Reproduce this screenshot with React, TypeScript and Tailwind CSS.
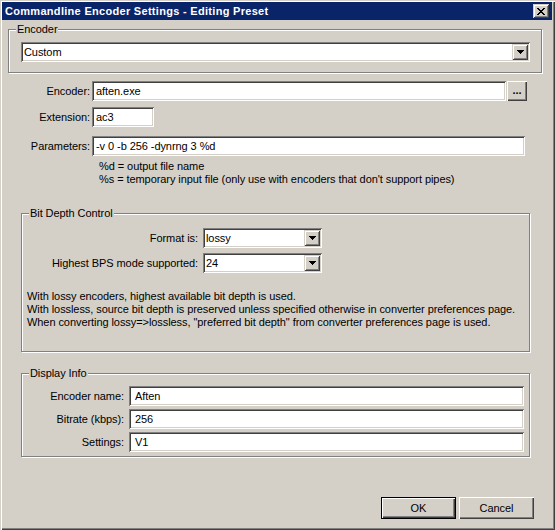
import React from "react";

const sunken =
  "bg-white shadow-[inset_1px_1px_#808080,inset_-1px_-1px_#ffffff,inset_2px_2px_#404040,inset_-2px_-2px_#d4d0c8]";
const raised =
  "bg-[#d4d0c8] shadow-[inset_1px_1px_#d4d0c8,inset_-1px_-1px_#404040,inset_2px_2px_#ffffff,inset_-2px_-2px_#808080]";
const pushBtn =
  "bg-[#d4d0c8] shadow-[inset_1px_1px_#ffffff,inset_-1px_-1px_#404040,inset_-2px_-2px_#808080]";

function Arrow() {
  return (
    <svg width="7" height="4" viewBox="0 0 7 4" shapeRendering="crispEdges">
      <path d="M0 0h7v1H0zM1 1h5v1H1zM2 2h3v1H2zM3 3h1v1H3z" fill="#000" />
    </svg>
  );
}

function CloseX() {
  return (
    <svg width="8" height="7" viewBox="0 0 8 7" shapeRendering="crispEdges">
      <path
        d="M0 0h2v1H0zM6 0h2v1H6zM1 1h2v1H1zM5 1h2v1H5zM2 2h4v1H2zM3 3h2v1H3zM2 4h4v1H2zM1 5h2v1H1zM5 5h2v1H5zM0 6h2v1H0zM6 6h2v1H6z"
        fill="#000"
      />
    </svg>
  );
}

function Combo({ value, className }: { value: string; className: string }) {
  return (
    <div className={`flex h-[20px] p-[2px] ${sunken} ${className}`}>
      <span className="flex-1 flex items-center pl-[1px] leading-none">{value}</span>
      <div className={`w-[16px] h-[16px] flex items-center justify-center ${raised}`}>
        <Arrow />
      </div>
    </div>
  );
}

function Edit({ value, className, pad = "pl-[4px]" }: { value: string; className: string; pad?: string }) {
  return (
    <div className={`h-[20px] flex items-center ${pad} ${sunken} ${className}`}>
      <span className="leading-none">{value}</span>
    </div>
  );
}

function Group({
  title,
  className,
  children,
}: {
  title: string;
  className: string;
  children?: React.ReactNode;
}) {
  return (
    <div
      className={`relative flex flex-col border border-[#808080] shadow-[inset_1px_1px_#ffffff,1px_1px_#ffffff] ${className}`}
    >
      <span className="absolute left-[7px] top-[-7px] bg-[#d4d0c8] px-[1px] leading-[13px]">{title}</span>
      {children}
    </div>
  );
}

export default function App() {
  return (
    <div className="w-[555px] h-[530px] bg-[#d4d0c8] flex flex-col overflow-hidden text-[11px] tracking-[-0.07px] text-black font-['Liberation_Sans',Arial,sans-serif] shadow-[inset_1px_1px_#d4d0c8,inset_2px_2px_#ffffff,inset_-1px_-1px_#404040,inset_-2px_-2px_#808080]">
      {/* Title bar */}
      <div className="ml-[2px] mr-[3px] mt-[2px] h-[18px] bg-[#0a246a] flex items-center pl-[3px] pr-[3px]">
        <span className="flex-1 text-white font-bold leading-none tracking-[0.3px]">
          Commandline Encoder Settings - Editing Preset
        </span>
        <div className={`w-[16px] h-[14px] flex items-center justify-center ${raised}`}>
          <CloseX />
        </div>
      </div>

      {/* Encoder group */}
      <Group title="Encoder" className="mt-[9px] ml-[8px] w-[534px] h-[44px]">
        <Combo value="Custom" className="mt-[12px] ml-[12px] w-[509px]" />
      </Group>

      {/* Encoder row */}
      <div className="mt-[8px] flex items-center h-[20px]">
        <span className="w-[90px] text-right">Encoder:</span>
        <Edit value="aften.exe" className="ml-[2px] w-[414px]" />
        <div className={`ml-[1px] w-[20px] h-[20px] flex items-end justify-center pb-[5px] font-bold leading-none ${pushBtn}`}>
          ...
        </div>
      </div>

      <div className="mt-[6px] flex items-center h-[20px]">
        <span className="w-[90px] text-right">Extension:</span>
        <Edit value="ac3" className="ml-[2px] w-[62px]" />
      </div>

      <div className="mt-[9px] flex items-center h-[20px]">
        <span className="w-[90px] text-right">Parameters:</span>
        <Edit value="-v 0 -b 256 -dynrng 3 %d" className="ml-[2px] w-[433px]" />
      </div>

      <div className="mt-[4px] pl-[99px] leading-[13px]">
        <div>%d = output file name</div>
        <div>%s = temporary input file (only use with encoders that don't support pipes)</div>
      </div>

      {/* Bit Depth Control */}
      <Group title="Bit Depth Control" className="mt-[27px] ml-[21px] w-[509px] h-[139px]">
        <div className="mt-[14px] flex items-center">
          <span className="w-[176px] text-right">Format is:</span>
          <Combo value="lossy" className="ml-[5px] w-[119px]" />
        </div>
        <div className="mt-[5px] flex items-center">
          <span className="w-[176px] text-right">Highest BPS mode supported:</span>
          <Combo value="24" className="ml-[5px] w-[119px]" />
        </div>
        <div className="mt-[17px] pl-[5px] leading-[13px]">
          <div>With lossy encoders, highest available bit depth is used.</div>
          <div>With lossless, source bit depth is preserved unless specified otherwise in converter preferences page.</div>
          <div>When converting lossy=&gt;lossless, "preferred bit depth" from converter preferences page is used.</div>
        </div>
      </Group>

      {/* Display Info */}
      <Group title="Display Info" className="mt-[21px] ml-[21px] w-[509px] h-[84px]">
        <div className="mt-[12px] flex items-center">
          <span className="w-[102px] text-right">Encoder name:</span>
          <Edit value="Aften" className="ml-[5px] w-[395px]" pad="pl-[6px]" />
        </div>
        <div className="mt-[3px] flex items-center">
          <span className="w-[102px] text-right">Bitrate (kbps):</span>
          <Edit value="256" className="ml-[5px] w-[395px]" pad="pl-[6px]" />
        </div>
        <div className="mt-[3px] flex items-center">
          <span className="w-[102px] text-right">Settings:</span>
          <Edit value="V1" className="ml-[5px] w-[395px]" pad="pl-[6px]" />
        </div>
      </Group>

      {/* Buttons */}
      <div className="mt-[40px] flex justify-end pr-[21px] gap-[3px]">
        <div className={`w-[75px] h-[22px] flex items-center justify-center border border-black ${pushBtn}`}>
          OK
        </div>
        <div className={`w-[75px] h-[22px] flex items-center justify-center ${pushBtn}`}>Cancel</div>
      </div>
    </div>
  );
}
